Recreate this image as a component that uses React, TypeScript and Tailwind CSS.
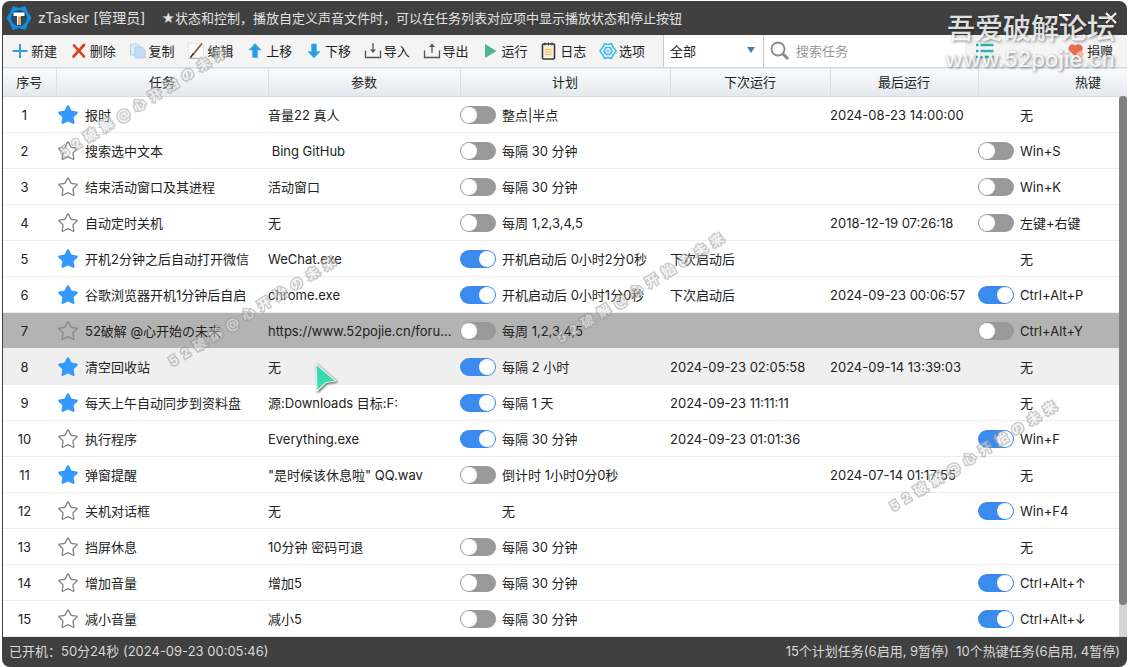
// src/App.tsx
import React, { useState } from 'react';
import { Star } from 'lucide-react';

interface Task {
    id: number;
    starred: boolean;
    name: string;
    params: string;
    planOn: boolean | null;
    plan: string;
    nextRun: string;
    lastRun: string;
    hotkeyOn: boolean | null;
    hotkey: string;
}

const initialTasks: Task[] = [
    { id: 1, starred: true, name: '报时', params: '音量22 真人', planOn: false, plan: '整点|半点', nextRun: '', lastRun: '2024-08-23 14:00:00', hotkeyOn: null, hotkey: '无' },
    { id: 2, starred: false, name: '搜索选中文本', params: ' Bing GitHub', planOn: false, plan: '每隔 30 分钟', nextRun: '', lastRun: '', hotkeyOn: false, hotkey: 'Win+S' },
    { id: 3, starred: false, name: '结束活动窗口及其进程', params: '活动窗口', planOn: false, plan: '每隔 30 分钟', nextRun: '', lastRun: '', hotkeyOn: false, hotkey: 'Win+K' },
    { id: 4, starred: false, name: '自动定时关机', params: '无', planOn: false, plan: '每周 1,2,3,4,5', nextRun: '', lastRun: '2018-12-19 07:26:18', hotkeyOn: false, hotkey: '左键+右键' },
    { id: 5, starred: true, name: '开机2分钟之后自动打开微信', params: 'WeChat.exe', planOn: true, plan: '开机启动后 0小时2分0秒', nextRun: '下次启动后', lastRun: '', hotkeyOn: null, hotkey: '无' },
    { id: 6, starred: true, name: '谷歌浏览器开机1分钟后自启', params: 'chrome.exe', planOn: true, plan: '开机启动后 0小时1分0秒', nextRun: '下次启动后', lastRun: '2024-09-23 00:06:57', hotkeyOn: true, hotkey: 'Ctrl+Alt+P' },
    { id: 7, starred: false, name: '52破解 @心开始の未来', params: 'https://www.52pojie.cn/foru...', planOn: false, plan: '每周 1,2,3,4,5', nextRun: '', lastRun: '', hotkeyOn: false, hotkey: 'Ctrl+Alt+Y' },
    { id: 8, starred: true, name: '清空回收站', params: '无', planOn: true, plan: '每隔 2 小时', nextRun: '2024-09-23 02:05:58', lastRun: '2024-09-14 13:39:03', hotkeyOn: null, hotkey: '无' },
    { id: 9, starred: true, name: '每天上午自动同步到资料盘', params: '源:Downloads 目标:F:', planOn: true, plan: '每隔 1 天', nextRun: '2024-09-23 11:11:11', lastRun: '', hotkeyOn: null, hotkey: '无' },
    { id: 10, starred: false, name: '执行程序', params: 'Everything.exe', planOn: true, plan: '每隔 30 分钟', nextRun: '2024-09-23 01:01:36', lastRun: '', hotkeyOn: true, hotkey: 'Win+F' },
    { id: 11, starred: true, name: '弹窗提醒', params: '"是时候该休息啦" QQ.wav', planOn: false, plan: '倒计时 1小时0分0秒', nextRun: '', lastRun: '2024-07-14 01:17:55', hotkeyOn: null, hotkey: '无' },
    { id: 12, starred: false, name: '关机对话框', params: '无', planOn: null, plan: '无', nextRun: '', lastRun: '', hotkeyOn: true, hotkey: 'Win+F4' },
    { id: 13, starred: false, name: '挡屏休息', params: '10分钟 密码可退', planOn: false, plan: '每隔 30 分钟', nextRun: '', lastRun: '', hotkeyOn: null, hotkey: '无' },
    { id: 14, starred: false, name: '增加音量', params: '增加5', planOn: false, plan: '每隔 30 分钟', nextRun: '', lastRun: '', hotkeyOn: true, hotkey: 'Ctrl+Alt+↑' },
    { id: 15, starred: false, name: '减小音量', params: '减小5', planOn: false, plan: '每隔 30 分钟', nextRun: '', lastRun: '', hotkeyOn: true, hotkey: 'Ctrl+Alt+↓' },
];

const iconClass = 'h-[18px] w-[18px] shrink-0';

const tools = [
    {
        label: '新建',
        icon: (
            <svg className={iconClass} viewBox="0 0 18 18">
                <path d="M9 2v14M1.500 9h15" stroke="#2ba3dc" strokeWidth="2" />
            </svg>
        ),
    },
    {
        label: '删除',
        icon: (
            <svg className={iconClass} viewBox="0 0 18 18">
                <path d="M4 3.500l10 11M14 3L3.500 14.500" stroke="#e03a1e" strokeWidth="2.600" strokeLinecap="round" />
            </svg>
        ),
    },
    {
        label: '复制',
        icon: (
            <svg className={iconClass} viewBox="0 0 18 18" stroke="#a9c9e6" strokeWidth="0.8">
                <path d="M1.500 2h7l2.500 2.500V13H1.500z" fill="#dcebf8" />
                <path d="M6 5h6.500L16 8.500V16H6z" fill="#c3dcf3" />
                <path d="M12.500 5v3.500H16z" fill="#eef6fd" />
            </svg>
        ),
    },
    {
        label: '编辑',
        icon: (
            <svg className={iconClass} viewBox="0 0 18 18" fill="none">
                <path d="M1.500 1.500h15v14h-15z" fill="#fafafa" stroke="#e6e6e6" />
                <path d="M1.500 16.500h10" stroke="#b5b5b5" />
                <path d="M15 1.500L6 12.500" stroke="#8a5a2b" strokeWidth="1.800" />
                <path d="M6.500 11.500L3.500 15.500" stroke="#333" strokeWidth="1.500" />
            </svg>
        ),
    },
    {
        label: '上移',
        icon: (
            <svg className={iconClass} viewBox="0 0 18 18">
                <path d="M9 1.500l6 6.500h-3.500v7.500h-5V8H3z" fill="#2b9be0" stroke="#55b4ec" strokeWidth="0.8" strokeLinejoin="round" />
            </svg>
        ),
    },
    {
        label: '下移',
        icon: (
            <svg className={iconClass} viewBox="0 0 18 18">
                <path d="M9 16l6-6.500h-3.500V2h-5v7.500H3z" fill="#2b9be0" stroke="#55b4ec" strokeWidth="0.8" strokeLinejoin="round" />
            </svg>
        ),
    },
    {
        label: '导入',
        icon: (
            <svg className={iconClass} viewBox="0 0 18 18" fill="none" stroke="#555" strokeWidth="1.300">
                <path d="M1.500 8.500v7h15v-7M9 1v9" />
                <path d="M6 7.500h6L9 11z" fill="#555" stroke="none" />
            </svg>
        ),
    },
    {
        label: '导出',
        icon: (
            <svg className={iconClass} viewBox="0 0 18 18" fill="none" stroke="#555" strokeWidth="1.300">
                <path d="M1.500 8.500v7h15v-7M9 11V3" />
                <path d="M6 5h6L9 1.500z" fill="#555" stroke="none" />
            </svg>
        ),
    },
    {
        label: '运行',
        icon: (
            <svg className={iconClass} viewBox="0 0 18 18">
                <path d="M4 2l11.500 7L4 16z" fill="#4ab58e" />
            </svg>
        ),
    },
    {
        label: '日志',
        icon: (
            <svg className={iconClass} viewBox="0 0 18 18" fill="none">
                <rect x="2.500" y="2" width="12" height="15" rx="1" fill="#fff" stroke="#333" strokeWidth="1.600" />
                <path d="M4 4h9v11H4z" fill="#fdebc6" />
                <path d="M5.500 7.500h6M5.500 10h6M5.500 12.500h6" stroke="#f5bd60" />
                <path d="M5 0.500v3M8.500 0.500v3M12 0.500v3" stroke="#333" />
            </svg>
        ),
    },
    {
        label: '选项',
        icon: (
            <svg className={iconClass} viewBox="0 0 18 18" fill="none" stroke="#3db8f5" strokeWidth="1.600" strokeLinejoin="round">
                <path d="M5.500 1.500L9 2.500l3.500-1 1.500 3.500 3 4-3 4-1.500 3.500-3.500-1-3.500 1L4 13 1 9l3-4z" />
                <path d="M7 5.500h4L13 9l-2 3.500H7L5 9z" />
                <circle cx="9" cy="9" r="1" strokeWidth="1" />
            </svg>
        ),
    },
];

const columns = [
    { label: '序号', width: 'w-[53px]' },
    { label: '任务', width: 'w-[212px]' },
    { label: '参数', width: 'w-[192px]' },
    { label: '计划', width: 'w-[210px]' },
    { label: '下次运行', width: 'w-[160px]' },
    { label: '最后运行', width: 'w-[148px]' },
    { label: '热键', width: 'w-[220px]' },
];

interface SwitchProps {
    checked: boolean;
    label: string;
    onChange: () => void;
}

const Switch: React.FC<SwitchProps> = ({ checked, label, onChange }) => (
    <input
        type="checkbox"
        role="switch"
        aria-label={label}
        checked={checked}
        onChange={onChange}
        className="flex h-[18px] w-9 shrink-0 appearance-none items-center rounded-full bg-[#999] px-px before:h-4 before:w-4 before:rounded-full before:bg-white checked:justify-end checked:bg-[#3b8bee]"
    />
);

const stampChars = ['5', '2', '破', '解', '@', '心', '开', '始', 'の', '未', '来'];

const Stamp: React.FC<{ position: string }> = ({ position }) => (
    <div
        aria-hidden="true"
        className={`pointer-events-none absolute flex -translate-x-1/2 -translate-y-1/2 -rotate-32 gap-1.5 font-bold text-[#eee] opacity-50 [paint-order:stroke_fill] [-webkit-text-stroke:3px_#999] ${position}`}
    >
        {stampChars.map((char, i) => (
            <span key={i}>{char}</span>
        ))}
    </div>
);

const App: React.FC = () => {
    const [tasks, setTasks] = useState<Task[]>(initialTasks);
    const [selectedId, setSelectedId] = useState(7);
    const [query, setQuery] = useState('');

    const updateTask = (id: number, changes: Partial<Task>) => {
        setTasks(tasks.map((task) => (task.id === id ? { ...task, ...changes } : task)));
    };

    const rowClass = (id: number) => {
        if (id === selectedId) return 'bg-[#b3b3b3]';
        if (id === 8) return 'bg-[#efefef]';
        return 'bg-white';
    };

    return (
        <div className="flex min-h-screen flex-col bg-white px-0.5 pt-px font-[Inter,'Noto_Sans_CJK_SC',sans-serif] text-[13px] leading-5 text-[#222]">
            <div className="relative flex flex-1 flex-col overflow-hidden rounded-lg bg-[#404040]">
                <header className="flex h-[34px] items-center pl-1 pr-2 text-[#e2e2e2]">
                    <svg className="h-[26px] w-[26px]" viewBox="0 0 26 26">
                        <path
                            d="M7 1.500l6 2 6-2 2.500 6L25 13l-3.500 5.500-2.500 6-6-2-6 2-2.500-6L1 13l3.500-5.500z"
                            fill="#0d8fe6"
                            stroke="#0d8fe6"
                            strokeLinejoin="round"
                        />
                        <circle cx="13" cy="13" r="8" fill="#2f4a5e" />
                        <path d="M7.500 7.500h11v3.500h-3.500v9h-4v-9H7.500z" fill="#fff" />
                        <path d="M12 11.500h3v8.500h-3z" fill="#eda45c" />
                    </svg>
                    <h1 className="ml-1.5 text-sm">zTasker [管理员]</h1>
                    <p className="ml-4">★状态和控制，播放自定义声音文件时，可以在任务列表对应项中显示播放状态和停止按钮</p>
                    <div className="ml-auto flex items-center gap-[30px]">
                        <button type="button" aria-label="最小化">
                            <svg className="h-4 w-4" viewBox="0 0 16 16" stroke="#fff" strokeWidth="2">
                                <path d="M2 5h12" />
                            </svg>
                        </button>
                        <button type="button" aria-label="关闭">
                            <svg className="h-4 w-4" viewBox="0 0 16 16" stroke="#fff" strokeWidth="2">
                                <path d="M3 3l10 10M13 3L3 13" />
                            </svg>
                        </button>
                    </div>
                </header>

                <div className="ml-px flex h-8 items-center bg-[#f4f4f4]">
                    <div className="flex w-[660px] shrink-0 justify-between pl-2 pr-[18px]">
                        {tools.map((tool) => (
                            <button key={tool.label} type="button" className="flex items-center gap-0.5">
                                {tool.icon}
                                {tool.label}
                            </button>
                        ))}
                    </div>
                    <div className="relative h-full w-[101px] shrink-0 border-x border-[#ccc] bg-white">
                        <select aria-label="分类" className="h-full w-full appearance-none bg-transparent pl-1.5">
                            <option>全部</option>
                        </select>
                        <svg className="pointer-events-none absolute right-2 top-3 h-1.5 w-2" viewBox="0 0 8 6" fill="#3f7fb5">
                            <path d="M0 0h8L4 6z" />
                        </svg>
                    </div>
                    <div className="flex h-full flex-1 items-center gap-1.5 bg-white pl-1.5">
                        <svg className="h-5 w-5 shrink-0" viewBox="0 0 20 20" fill="none" stroke="#888">
                            <circle cx="8" cy="8" r="6.500" strokeWidth="1.800" />
                            <path d="M12.500 12.500l5.500 5.500" strokeWidth="3" />
                        </svg>
                        <input
                            type="text"
                            aria-label="搜索任务"
                            placeholder="搜索任务"
                            value={query}
                            onChange={(e) => setQuery(e.target.value)}
                            className="w-full min-w-0 outline-none placeholder:text-[#999]"
                        />
                    </div>
                    <div className="flex shrink-0 items-center gap-[72px] pl-2.5 pr-3.5">
                        <button type="button" aria-label="列表">
                            <svg className="h-5 w-5" viewBox="0 0 20 20" strokeWidth="2.500">
                                <path d="M5.500 4h13M5.500 10h13M5.500 16h13" stroke="#2fb3b0" />
                                <path d="M1 4h2.500M1 10h2.500M1 16h2.500" stroke="#29a5e8" />
                            </svg>
                        </button>
                        <button type="button" className="flex items-center gap-0.5">
                            <svg className={iconClass} viewBox="0 0 18 18">
                                <path d="M9 15.500L2 8C0 4.500 5 0 8.500 3.500 12 0 17 4 15.500 8z" fill="#ea6a4d" />
                                <path d="M8 16c0-4 3-7 7-7l2 3-4 5z" fill="#f6b79a" />
                            </svg>
                            捐赠
                        </button>
                    </div>
                </div>

                <main className="relative ml-px flex-1 overflow-hidden bg-white">
                    <table className="w-[1195px] table-fixed border-collapse">
                        <thead>
                            <tr className="h-[29px] border-y border-[#d3dce6] bg-linear-to-b from-[#fafbfc] to-[#e5e8ee]">
                                {columns.map((column) => (
                                    <th key={column.label} className={`border-r border-[#d3dfea] p-0 font-normal ${column.width}`}>
                                        {column.label}
                                    </th>
                                ))}
                            </tr>
                        </thead>
                        <tbody>
                            {tasks.map((task) => (
                                <tr
                                    key={task.id}
                                    onClick={() => setSelectedId(task.id)}
                                    className={`h-9 border-b border-[#ececec] whitespace-pre ${rowClass(task.id)}`}
                                >
                                    <td className="py-0 pl-0 pr-2.5 text-center">{task.id}</td>
                                    <td className="p-0">
                                        <div className="flex items-center gap-1.5 pl-px">
                                            <button
                                                type="button"
                                                aria-label="收藏"
                                                onClick={() => updateTask(task.id, { starred: !task.starred })}
                                            >
                                                <Star
                                                    className={
                                                        task.starred
                                                            ? 'h-[22px] w-[22px] fill-[#3399ff] text-[#3399ff]'
                                                            : 'h-[22px] w-[22px] text-[#888]'
                                                    }
                                                    strokeWidth={1.5}
                                                />
                                            </button>
                                            {task.name}
                                        </div>
                                    </td>
                                    <td className="p-0">{task.params}</td>
                                    <td className="p-0">
                                        {task.planOn === null ? (
                                            <div className="pl-[42px]">{task.plan}</div>
                                        ) : (
                                            <div className="flex items-center gap-1.5">
                                                <Switch
                                                    label={`${task.name} 计划`}
                                                    checked={task.planOn}
                                                    onChange={() => updateTask(task.id, { planOn: !task.planOn })}
                                                />
                                                {task.plan}
                                            </div>
                                        )}
                                    </td>
                                    <td className="p-0">{task.nextRun}</td>
                                    <td className="p-0">{task.lastRun}</td>
                                    <td className="p-0">
                                        {task.hotkeyOn === null ? (
                                            <div className="pl-[42px]">{task.hotkey}</div>
                                        ) : (
                                            <div className="flex items-center gap-1.5">
                                                <Switch
                                                    label={`${task.name} 热键`}
                                                    checked={task.hotkeyOn}
                                                    onChange={() => updateTask(task.id, { hotkeyOn: !task.hotkeyOn })}
                                                />
                                                {task.hotkey}
                                            </div>
                                        )}
                                    </td>
                                </tr>
                            ))}
                        </tbody>
                    </table>
                    {/* scrollbar */}
                    <div className="absolute bottom-0 right-0 top-[29px] w-2 bg-[#d4d4d4]">
                        <div className="h-[94%] rounded bg-[#808080]"></div>
                    </div>
                </main>

                <footer className="flex h-[30px] items-center justify-between px-[7px] pb-0.5 text-[#d8d8d8]">
                    <span>已开机：50分24秒 (2024-09-23 00:05:46)</span>
                    <span className="whitespace-pre">15个计划任务(6启用, 9暂停)  10个热键任务(6启用, 4暂停)</span>
                </footer>

                <Stamp position="left-[141px] top-[101px]" />
                <Stamp position="left-[250px] top-[310px]" />
                <Stamp position="left-[638px] top-[287px]" />
                <Stamp position="left-[971px] top-[455px]" />

                <div
                    aria-hidden="true"
                    className="pointer-events-none absolute right-3 top-3 text-right font-medium text-white/85 [text-shadow:1px_1px_3px_#00000080]"
                >
                    <p className="text-[28px] leading-8">吾爱破解论坛</p>
                    <p className="text-[22px] leading-7">www.52pojie.cn</p>
                </div>

                <svg className="pointer-events-none absolute left-[312px] top-[361px] h-8 w-6 drop-shadow-[1px_1px_1px_#555]" viewBox="0 0 24 32">
                    <path d="M2 2l20 17-10 1.500L3 29z" fill="#35dcae" stroke="#e8f4f0" strokeWidth="1.200" strokeLinejoin="round" />
                </svg>
            </div>
        </div>
    );
};

export default App;
